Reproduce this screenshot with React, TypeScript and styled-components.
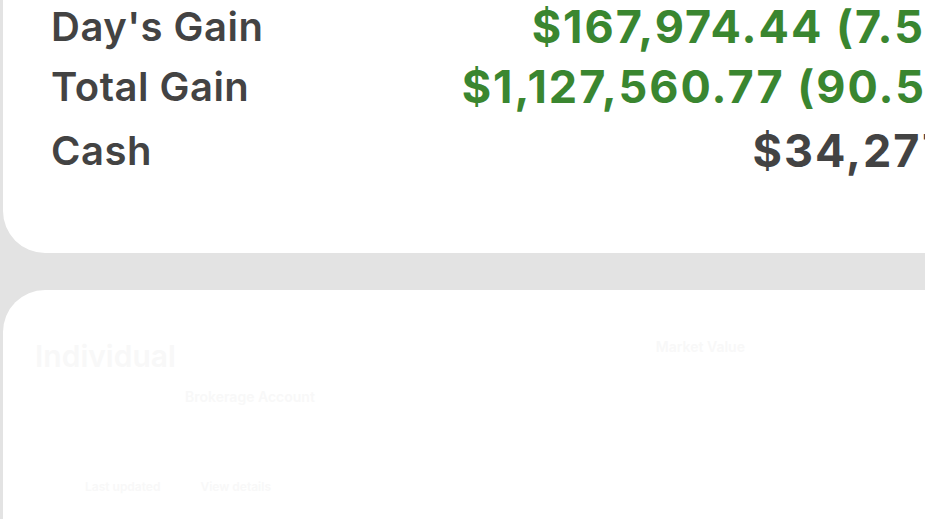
import React from 'react';
import styled, { createGlobalStyle } from 'styled-components';

const GlobalStyle = createGlobalStyle`
  html, body {
    margin: 0;
    padding: 0;
    background: #e3e3e3;
    overflow: hidden;
  }
  body {
    font-family: Inter, "Noto Sans", "Liberation Sans", sans-serif;
  }
`;

const Viewport = styled.div`
  width: 925px;
  height: 519px;
  overflow: hidden;
  background: #e3e3e3;
`;

const Stack = styled.div`
  width: 1060px;
  margin-left: 3px;
  display: flex;
  flex-direction: column;
  gap: 37px;
`;

const SummaryCard = styled.section`
  height: 253px;
  box-sizing: border-box;
  background: #ffffff;
  border-radius: 0 0 42px 42px;
  padding: 0 40px 0 48px;
`;

const Row = styled.div<{ $gap?: number }>`
  display: flex;
  justify-content: space-between;
  align-items: flex-start;
  margin-top: ${p => p.$gap ?? 0}px;
  line-height: 54px;
  white-space: nowrap;
`;

const Label = styled.span`
  font-size: 40px;
  font-weight: 600;
  color: #434343;
  letter-spacing: 0.5px;
`;

const Value = styled.span<{ $tone?: 'gain' | 'plain' }>`
  font-size: 45px;
  font-weight: 700;
  color: ${p => (p.$tone === 'gain' ? '#3a8630' : '#434343')};
  letter-spacing: 2px;
`;

const AccountCard = styled.section`
  height: 300px;
  background: #ffffff;
  border-radius: 42px 42px 0 0;
  padding: 48px 60px 0 32px;
  box-sizing: border-box;
  display: flex;
  flex-direction: column;
  gap: 14px;
`;

const GhostLine = styled.div<{ $indent?: number }>`
  display: flex;
  gap: 40px;
  padding-left: ${p => p.$indent ?? 0}px;
  color: #f8f8f8;
  font-weight: 600;
  white-space: nowrap;
`;

const GhostText = styled.span<{ $size?: number }>`
  font-size: ${p => p.$size ?? 16}px;
`;

export default function App() {
  return (
    <Viewport>
      <GlobalStyle />
      <Stack>
        <SummaryCard>
          <Row>
            <Label>Day's Gain</Label>
            <Value $tone="gain">$167,974.44 (7.56%)</Value>
          </Row>
          <Row $gap={6}>
            <Label>Total Gain</Label>
            <Value $tone="gain">$1,127,560.77 (90.52%)</Value>
          </Row>
          <Row $gap={10}>
            <Label>Cash</Label>
            <Value $tone="plain">$34,277.83</Value>
          </Row>
        </SummaryCard>
        <AccountCard>
          <GhostLine>
            <GhostText $size={30}>Individual</GhostText>
            <GhostText $size={14} style={{ marginLeft: 440 }}>Market Value</GhostText>
          </GhostLine>
          <GhostLine $indent={150}>
            <GhostText $size={14}>Brokerage Account</GhostText>
          </GhostLine>
          <GhostLine $indent={50} style={{ marginTop: 60 }}>
            <GhostText $size={12}>Last updated</GhostText>
            <GhostText $size={12}>View details</GhostText>
          </GhostLine>
        </AccountCard>
      </Stack>
    </Viewport>
  );
}
